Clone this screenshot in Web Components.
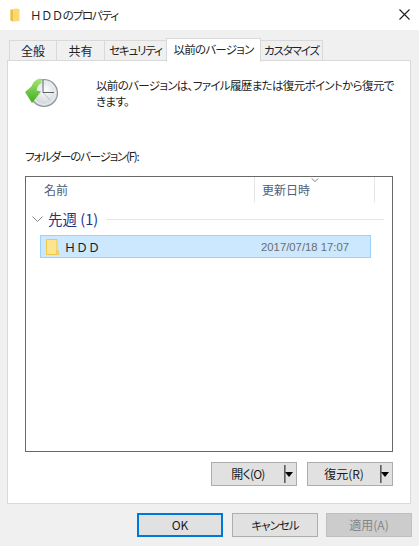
<!DOCTYPE html>
<html lang="ja">
<head>
<meta charset="utf-8">
<title>HDDのプロパティ</title>
<style>
  html, body { margin: 0; height: 546px; overflow: hidden; background: #f0f0f0; }
  body { font: 12px/16px "Noto Sans CJK JP", "Liberation Sans", sans-serif; color: #1a1a1a; font-feature-settings: "palt"; }
</style>
</head>
<body>
<props-dialog></props-dialog>
<script>
  class TitleBar extends HTMLElement {
    constructor() {
      super();
      this.attachShadow({ mode: "open" });
    }

    connectedCallback() {
      this.shadowRoot.innerHTML = `
        <style>
          :host { display: flex; align-items: center; height: 30px; background: #fff; padding: 0 9px 0 10px; }
          .icon { width: 10px; height: 14px; margin-right: 10px; }
          .name { flex: 1; font-size: 11.5px; color: #222; letter-spacing: -1.2px; white-space: pre; }
          .close { width: 11px; height: 11px; margin-top: -1px; }
        </style>
        <svg class="icon" viewBox="0 0 10 14">
          <path d="M0.5 1.5 L6 0.5 L9.5 1 V13 L3 13.5 L0.5 12.5 Z" fill="#fbd96f"/>
          <path d="M0.5 1.5 L3 2.5 V13.5 L0.5 12.5 Z" fill="#eebd45"/>
        </svg>
        <span class="name"><slot></slot></span>
        <svg class="close" viewBox="0 0 11 11"><path d="M0.5 0.5 L10.5 10.5 M10.5 0.5 L0.5 10.5" stroke="#1c1c1c" stroke-width="1.1" fill="none"/></svg>
      `;
    }
  }

  class TabStrip extends HTMLElement {
    constructor() {
      super();
      this.attachShadow({ mode: "open" });
    }

    connectedCallback() {
      this.shadowRoot.innerHTML = `
        <style>
          :host { display: flex; align-items: flex-end; height: 22px; padding-left: 9px; position: relative; z-index: 1; margin-bottom: -1px; }
        </style>
        <slot></slot>
      `;
    }
  }

  class TabItem extends HTMLElement {
    constructor() {
      super();
      this.attachShadow({ mode: "open" });
    }

    connectedCallback() {
      this.shadowRoot.innerHTML = `
        <style>
          :host { display: block; box-sizing: border-box; height: 21px; background: #f0f0f0; border: 1px solid #d9d9d9; margin-right: -1px; text-align: center; font-size: 12px; line-height: 19px; color: #222; white-space: nowrap; }
          :host([active]) { height: 24px; background: #fff; border-bottom: 0; position: relative; z-index: 1; line-height: 20px; margin-bottom: -1px; }
          :host([kana]) { font-size: 11.5px; letter-spacing: -1.15px; }
          :host([active]) { font-size: 11.5px; letter-spacing: -0.75px; }
        </style>
        <slot></slot>
      `;
      this.style.width = this.getAttribute("w") + "px";
    }
  }

  class VersionList extends HTMLElement {
    constructor() {
      super();
      this.attachShadow({ mode: "open" });
    }

    connectedCallback() {
      this.shadowRoot.innerHTML = `
        <style>
          :host { display: block; box-sizing: border-box; height: 276px; margin-left: 17px; width: 368px; background: #fff; border: 1px solid #696969; }
          .head { display: flex; height: 25px; color: #4c607a; font-size: 12px; line-height: 25px; }
          .col { box-sizing: border-box; border-right: 1px solid #e5e5e5; position: relative; }
          .c1 { width: 229px; padding-left: 18px; }
          .c2 { width: 120px; padding-left: 7px; }
          .sort { position: absolute; left: 56px; top: 1px; width: 8px; height: 4px; }
          .group { display: flex; align-items: center; height: 16px; margin: 9px 8px 0 6px; color: #1e3287; font-size: 14.5px; }
          .chev { width: 11px; height: 6px; margin-right: 5px; }
          .rule { flex: 1; height: 1px; background: #e5e5e5; margin-left: 8px; }
          .row { box-sizing: border-box; display: flex; align-items: center; height: 23px; margin: 8px 0 0 14px; width: 331px; background: #cce8ff; border: 1px solid #99d1ff; padding-left: 5px; }
          .row svg { width: 13px; height: 16px; margin-right: 5px; }
          .name { flex: 1; font-size: 12px; color: #1a1a1a; font-feature-settings: normal; white-space: pre; }
          .date { font: 11.3px "Liberation Sans", sans-serif; color: #6d6d6d; margin-right: 21px; }
        </style>
        <div class="head">
          <div class="col c1">名前</div>
          <div class="col c2">更新日時
            <svg class="sort" viewBox="0 0 8 4"><path d="M0.5 0.3 L4 3.6 L7.5 0.3" fill="none" stroke="#8a8a8a"/></svg>
          </div>
        </div>
        <div class="group">
          <svg class="chev" viewBox="0 0 11 6"><path d="M0.5 0.5 L5.5 5.5 L10.5 0.5" fill="none" stroke="#8c8c8c"/></svg>
          <span>先週 (1)</span>
          <div class="rule"></div>
        </div>
        <div class="row">
          <svg viewBox="0 0 13 16">
            <path d="M0.5 0.5 H11 V12 H12.5 V15.5 H0.5 Z" fill="#fde58f" stroke="#efc94c"/>
            <path d="M10.5 15.5 V12 H12.5" fill="#f7d264" stroke="#efc94c"/>
          </svg>
          <span class="name">ＨＤＤ</span>
          <span class="date">2017/07/18 17:07</span>
        </div>
      `;
    }
  }

  class PlainButton extends HTMLElement {
    constructor() {
      super();
      this.attachShadow({ mode: "open" });
    }

    connectedCallback() {
      this.shadowRoot.innerHTML = `
        <style>
          :host { display: flex; align-items: center; justify-content: center; box-sizing: border-box; width: 86px; height: 24px; background: #e1e1e1; border: 1px solid #adadad; font-size: 12px; color: #1a1a1a; }
          :host([default]) { border: 2px solid #0078d7; margin-right: 1px; }
          :host([disabled]) { background: #cccccc; border-color: #bfbfbf; color: #868686; }
          :host([kana]) { font-size: 11.5px; letter-spacing: -1px; }
        </style>
        <slot></slot>
      `;
    }
  }

  class SplitButton extends HTMLElement {
    constructor() {
      super();
      this.attachShadow({ mode: "open" });
    }

    connectedCallback() {
      this.shadowRoot.innerHTML = `
        <style>
          :host { display: flex; align-items: center; box-sizing: border-box; width: 86px; height: 24px; background: #e1e1e1; border: 1px solid #adadad; font-size: 12px; color: #1a1a1a; }
          .label { flex: 1; text-align: center; }
          .sep { width: 1px; height: 18px; background: #5f5f5f; border-right: 1px solid #8f8f8f; }
          .arrow { width: 0; height: 0; margin: 0 3px 0 -1px; border-style: solid; border-width: 5px 4.5px 0 4.5px; border-color: #000 transparent transparent transparent; }
        </style>
        <span class="label"><slot></slot></span>
        <span class="sep"></span>
        <span class="arrow"></span>
      `;
    }
  }

  class PrevVersionsPanel extends HTMLElement {
    constructor() {
      super();
      this.attachShadow({ mode: "open" });
    }

    connectedCallback() {
      this.shadowRoot.innerHTML = `
        <style>
          :host { display: block; box-sizing: border-box; height: 444px; margin: 0 8px 0 7px; background: #fff; border: 1px solid #d9d9d9; }
          .intro { display: flex; height: 66px; padding-top: 15px; box-sizing: border-box; }
          .clock { width: 34px; height: 34px; margin: 0 0 0 17px; flex: none; }
          .intro p { margin: 2px 0 0 37px; width: 298px; font-size: 11.5px; letter-spacing: -0.65px; line-height: 15.5px; color: #222; }
          .label { margin: 21px 0 0 17px; height: 16px; font-size: 11.5px; letter-spacing: -1.2px; line-height: 16px; color: #222; }
          version-list { margin-top: 12px; }
          .actions { display: flex; gap: 10px; justify-content: flex-end; margin: 10px 17px 0 0; }
        </style>
        <div class="intro">
          <svg class="clock" viewBox="0 0 34 34">
            <defs>
              <radialGradient id="face" cx="0.55" cy="0.4" r="0.65">
                <stop offset="0" stop-color="#ffffff"/>
                <stop offset="1" stop-color="#c4ccd0"/>
              </radialGradient>
              <linearGradient id="arrow" x1="0" y1="0" x2="0" y2="1">
                <stop offset="0" stop-color="#a6e472"/>
                <stop offset="1" stop-color="#3fae1c"/>
              </linearGradient>
            </defs>
            <circle cx="19" cy="17" r="13.5" fill="url(#face)" stroke="#8f979c" stroke-width="1.2"/>
            <circle cx="19" cy="17" r="11.5" fill="none" stroke="#eef1f2"/>
            <path d="M18 16.5 L25 24" fill="none" stroke="#b9c0c4" stroke-width="1"/>
            <path d="M16 2.5 C11 3 8 6 7 10 L0 16 L7 27 L16 15.5 L11.5 14.5 C12 11 13.5 8 16.5 7 Z" fill="url(#arrow)"/>
            <path d="M18 4 V16.5 H29" fill="none" stroke="#5c6368" stroke-width="1"/>
          </svg>
          <p>以前のバージョンは、ファイル履歴または復元ポイントから復元できます。</p>
        </div>
        <div class="label">フォルダーのバージョン(F):</div>
        <version-list></version-list>
        <div class="actions">
          <split-button style="letter-spacing: -0.8px">開く(O)</split-button>
          <split-button>復元(R)</split-button>
        </div>
      `;
    }
  }

  class PropsDialog extends HTMLElement {
    constructor() {
      super();
      this.attachShadow({ mode: "open" });
    }

    connectedCallback() {
      this.shadowRoot.innerHTML = `
        <style>
          :host { display: block; width: 419px; height: 546px; }
          .spacer { height: 9px; }
          .hdd { font-feature-settings: normal; letter-spacing: -0.6px; }
          .foot { display: flex; gap: 8px; justify-content: flex-end; margin: 9px 7px 0 0; }
        </style>
        <title-bar><span class="hdd">ＨＤＤ</span>のプロパティ</title-bar>
        <div class="spacer"></div>
        <tab-strip>
          <tab-item w="48">全般</tab-item>
          <tab-item w="49">共有</tab-item>
          <tab-item w="63" kana>セキュリティ</tab-item>
          <tab-item w="95" active>以前のバージョン</tab-item>
          <tab-item w="63" kana>カスタマイズ</tab-item>
        </tab-strip>
        <prev-versions-panel></prev-versions-panel>
        <div class="foot">
          <plain-button default>OK</plain-button>
          <plain-button kana>キャンセル</plain-button>
          <plain-button disabled>適用(A)</plain-button>
        </div>
      `;
    }
  }

  // children first so they upgrade as soon as the parent renders
  customElements.define("title-bar", TitleBar);
  customElements.define("tab-strip", TabStrip);
  customElements.define("tab-item", TabItem);
  customElements.define("version-list", VersionList);
  customElements.define("plain-button", PlainButton);
  customElements.define("split-button", SplitButton);
  customElements.define("prev-versions-panel", PrevVersionsPanel);
  customElements.define("props-dialog", PropsDialog);
</script>
</body>
</html>
